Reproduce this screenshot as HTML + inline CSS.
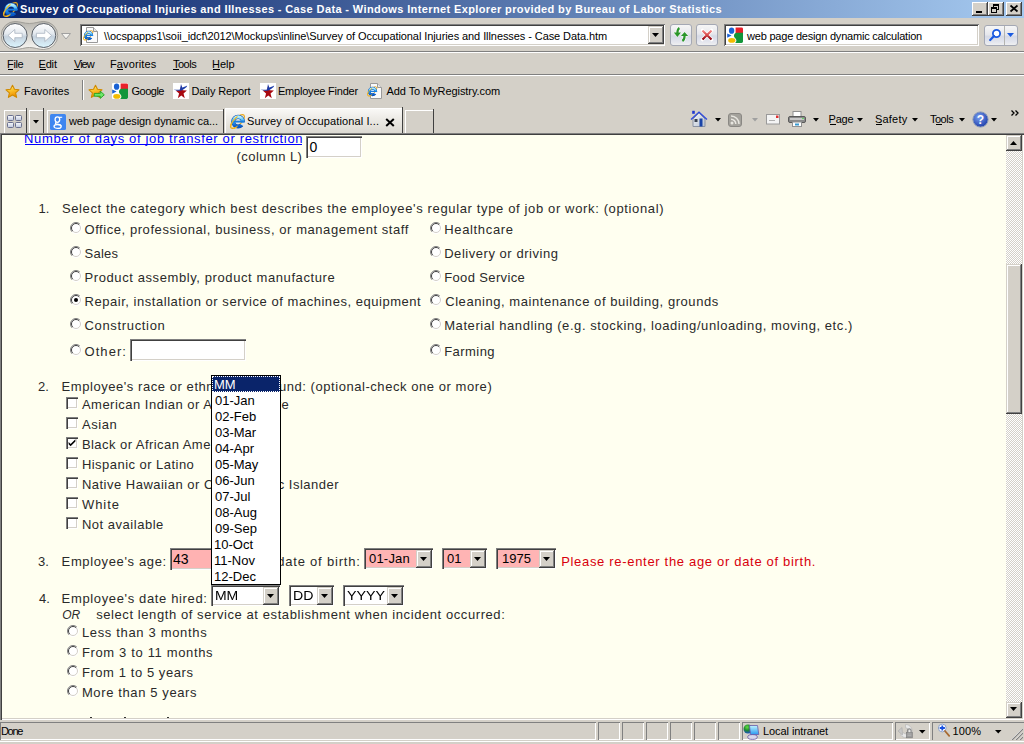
<!DOCTYPE html>
<html><head><meta charset="utf-8"><title>Survey of Occupational Injuries and Illnesses - Case Data</title>
<style>
html,body{margin:0;padding:0;width:1024px;height:744px;overflow:hidden;background:#d4d0c8;position:relative}
div,span,svg{position:absolute;box-sizing:border-box}
span{white-space:pre;line-height:normal}
</style></head><body>
<div style="left:0px;top:0px;width:1024px;height:18px;background:linear-gradient(to right,#0a246a,#a6caf0)"></div>
<svg style="position:absolute;left:2px;top:1px" width="17" height="17" viewBox="0 0 18 18"><defs><linearGradient id="iegt" x1="0" y1="0" x2="0" y2="1"><stop offset="0" stop-color="#b4f0ff"/><stop offset=".4" stop-color="#38b0f8"/><stop offset="1" stop-color="#0858c8"/></linearGradient>
<mask id="iemt" maskUnits="userSpaceOnUse" x="-2" y="-2" width="22" height="22"><rect width="18" height="18" fill="#fff"/><path d="M9.3 10.1H18V15.5Z" fill="#000"/></mask><clipPath id="iect"><path d="M0 0H18L0 18Z"/></clipPath></defs>
<ellipse cx="9" cy="9" rx="9.6" ry="3.9" transform="rotate(-45 9 9)" fill="none" stroke="#e8a818" stroke-width="1.3"/>
<g mask="url(#iemt)"><circle cx="9.6" cy="9.2" r="5.1" fill="none" stroke="#0a4cb0" stroke-width="4.4"/><circle cx="9.6" cy="9.2" r="5.1" fill="none" stroke="url(#iegt)" stroke-width="3.4"/></g>
<rect x="4.6" y="8.1" width="11.2" height="2" fill="#1a7ee0"/>
<ellipse cx="9" cy="9" rx="9.6" ry="3.9" transform="rotate(-45 9 9)" fill="none" stroke="#f4b820" stroke-width="1.3" clip-path="url(#iect)"/></svg>
<span style="left:20.00px;top:3px;font-family:'Liberation Sans';font-size:11px;font-weight:bold;font-style:normal;color:#fff;letter-spacing:0.382px;">Survey of Occupational Injuries and Illnesses - Case Data - Windows Internet Explorer provided by Bureau of Labor Statistics</span>
<div style="left:972px;top:2px;width:16px;height:14px;background:#d4d0c8;box-shadow:inset -1px -1px #404040,inset 1px 1px #fff,inset -2px -2px #808080;"></div>
<div style="left:988px;top:2px;width:16px;height:14px;background:#d4d0c8;box-shadow:inset -1px -1px #404040,inset 1px 1px #fff,inset -2px -2px #808080;"></div>
<div style="left:1006px;top:2px;width:16px;height:14px;background:#d4d0c8;box-shadow:inset -1px -1px #404040,inset 1px 1px #fff,inset -2px -2px #808080;"></div>
<div style="left:976px;top:11px;width:6px;height:2px;background:#000"></div>
<div style="left:993px;top:4px;width:6px;height:6px;border:1px solid #000;border-top-width:2px;background:transparent"></div>
<div style="left:991px;top:7px;width:6px;height:6px;border:1px solid #000;border-top-width:2px;background:#d4d0c8"></div>
<svg style="position:absolute;left:1009px;top:4px" width="10" height="9" viewBox="0 0 10 9"><path d="M1.5 1.5L8.5 7.5M8.5 1.5L1.5 7.5" stroke="#000" stroke-width="1.7"/></svg>
<svg style="position:absolute;left:1px;top:20px" width="58" height="31" viewBox="0 0 58 31"><defs>
<linearGradient id="bg1" x1="0" y1="0" x2="0" y2="1"><stop offset="0" stop-color="#ffffff"/><stop offset=".42" stop-color="#e4e9ef"/><stop offset=".55" stop-color="#c6d2de"/><stop offset="1" stop-color="#dcf6ff"/></linearGradient>
<linearGradient id="pn" x1="0" y1="0" x2="0" y2="1"><stop offset="0" stop-color="#b8b6b0"/><stop offset=".5" stop-color="#d8d6d0"/><stop offset="1" stop-color="#f8f7f4"/></linearGradient></defs>
<path d="M14.1 1.5C19 1.5 23 3.5 28.4 3.5S38 1.5 42.75 1.5A14 14 0 0 1 42.75 29.5C38 29.5 33 27.5 28.4 27.5S19 29.5 14.1 29.5A14 14 0 0 1 14.1 1.5Z" fill="url(#pn)" stroke="#a09e98" stroke-width="1"/>
<circle cx="14.1" cy="15.5" r="12" fill="url(#bg1)" stroke="#5a6068" stroke-width="1"/>
<circle cx="42.75" cy="15.5" r="12" fill="url(#bg1)" stroke="#5a6068" stroke-width="1"/>
<path d="M7 15.5L13.8 9.5V13.3H21.2V17.7H13.8V21.5Z" fill="#fff" stroke="#aab4c0" stroke-width=".8"/>
<path d="M50.6 15.5L43.8 9.5V13.3H35.4V17.7H43.8V21.5Z" fill="#fff" stroke="#aab4c0" stroke-width=".8"/></svg>
<svg style="position:absolute;left:61px;top:33px" width="10" height="7" viewBox="0 0 10 7"><path d="M0.5 0.5H9.5L5 6Z" fill="#f4f3ef" stroke="#a0a0a0" stroke-width="1"/></svg>
<div style="left:80px;top:24px;width:585px;height:22px;background:#fff;box-shadow:inset 1px 1px #808080,inset -1px -1px #fff,inset 2px 2px #404040,inset -2px -2px #d4d0c8;"></div>
<svg style="position:absolute;left:83px;top:27px" width="16" height="16" viewBox="0 0 16 16"><path d="M3.5 0.5H10.5L14.5 4.5V15.5H3.5Z" fill="#fafafa" stroke="#9a9a9a"/><path d="M10.5 0.5V4.5H14.5" fill="#e8e8e8" stroke="#9a9a9a"/><g transform="translate(-0.6,2.6) scale(.64)"><defs><linearGradient id="iega" x1="0" y1="0" x2="0" y2="1"><stop offset="0" stop-color="#b4f0ff"/><stop offset=".4" stop-color="#38b0f8"/><stop offset="1" stop-color="#0858c8"/></linearGradient>
<mask id="iema" maskUnits="userSpaceOnUse" x="-2" y="-2" width="22" height="22"><rect width="18" height="18" fill="#fff"/><path d="M9.3 10.1H18V15.5Z" fill="#000"/></mask><clipPath id="ieca"><path d="M0 0H18L0 18Z"/></clipPath></defs>
<ellipse cx="9" cy="9" rx="9.6" ry="3.9" transform="rotate(-45 9 9)" fill="none" stroke="#e8a818" stroke-width="1.3"/>
<g mask="url(#iema)"><circle cx="9.6" cy="9.2" r="5.1" fill="none" stroke="#0a4cb0" stroke-width="4.4"/><circle cx="9.6" cy="9.2" r="5.1" fill="none" stroke="url(#iega)" stroke-width="3.4"/></g>
<rect x="4.6" y="8.1" width="11.2" height="2" fill="#1a7ee0"/>
<ellipse cx="9" cy="9" rx="9.6" ry="3.9" transform="rotate(-45 9 9)" fill="none" stroke="#f4b820" stroke-width="1.3" clip-path="url(#ieca)"/></g></svg>
<span style="left:104.00px;top:30px;font-family:'Liberation Sans';font-size:11px;font-weight:normal;font-style:normal;color:#000;letter-spacing:-0.078px;">\\ocspapps1\soii_idcf\2012\Mockups\inline\Survey of Occupational Injuries and Illnesses - Case Data.htm</span>
<div style="left:648px;top:26px;width:16px;height:18px;background:#d4d0c8;box-shadow:inset -1px -1px #404040,inset 1px 1px #d4d0c8,inset -2px -2px #808080,inset 2px 2px #fff;"></div>
<svg style="position:absolute;left:652px;top:33px" width="8" height="5" viewBox="0 0 8 5"><path d="M0 0H7L3.5 4Z" fill="#000"/></svg>
<div style="left:670px;top:24px;width:22px;height:22px;background:linear-gradient(#f6f6f6,#e6e7ec 45%,#d6dae6 55%,#e4e6ee 85%,#f0f0f0);border:1px solid #a4a8b4;border-radius:3px;"></div>
<svg style="position:absolute;left:670px;top:24px" width="22" height="22" viewBox="0 0 22 22"><g stroke="#fff" stroke-width="1" stroke-linejoin="round"><path d="M9.4 4C8 4.8 7.4 6.5 7.4 9" fill="none" stroke-width="3.6"/><path d="M3.8 8.6H11L7.4 12.9Z" fill="#fff"/><path d="M12.4 17C14 16 14.6 14 14.6 11.5" fill="none" stroke-width="3.6"/><path d="M10.9 11.9H18.2L14.6 7.9Z" fill="#fff"/></g><path d="M9.4 4C8 4.8 7.4 6.5 7.4 9" fill="none" stroke="#2a962a" stroke-width="2.2"/><path d="M3.8 8.6H11L7.4 12.9Z" fill="#2a962a"/><path d="M12.4 17C14 16 14.6 14 14.6 11.5" fill="none" stroke="#2a962a" stroke-width="2.2"/><path d="M10.9 11.9H18.2L14.6 7.9Z" fill="#2a962a"/></svg>
<div style="left:696px;top:24px;width:22px;height:22px;background:linear-gradient(#f6f6f6,#e6e7ec 45%,#d6dae6 55%,#e4e6ee 85%,#f0f0f0);border:1px solid #a4a8b4;border-radius:3px;"></div>
<svg style="position:absolute;left:696px;top:24px" width="22" height="22" viewBox="0 0 22 22"><defs><linearGradient id="stx" x1="0" y1="0" x2="0" y2="1"><stop offset="0" stop-color="#f08a8a"/><stop offset=".5" stop-color="#d84848"/><stop offset="1" stop-color="#8a0010"/></linearGradient></defs><path d="M6.5 6.5L15.5 15.5M15.5 6.5L6.5 15.5" stroke="#fff" stroke-width="3.6" stroke-linecap="round"/><path d="M6.5 6.5L15.5 15.5M15.5 6.5L6.5 15.5" stroke="url(#stx)" stroke-width="2.2"/></svg>
<div style="left:724px;top:24px;width:255px;height:22px;background:#fff;box-shadow:inset 1px 1px #808080,inset -1px -1px #fff,inset 2px 2px #404040,inset -2px -2px #d4d0c8;"></div>
<svg style="position:absolute;left:727px;top:27px" width="16" height="16" viewBox="0 0 16 16"><rect width="16" height="16" rx="1" fill="#fff"/><path d="M8.6 0.4H14.6A1.4 1.4 0 0 1 16 1.8V6.2H8.6Z" fill="#e8202a"/><path d="M9 5.8H16V14.6A1.4 1.4 0 0 1 14.6 16H8C9.4 15 9.8 13.6 9 12.2C8.2 10.8 6.8 10.4 7 8.6C7.1 7.2 8 6.4 9 5.8Z" fill="#12963a"/>
<ellipse cx="4.6" cy="3.7" rx="2.7" ry="3.1" fill="#1a62d4"/><path d="M0.2 6.4L4.6 8.6L0.2 10.8Z" fill="#1a62d4"/><ellipse cx="4.8" cy="13.4" rx="3.6" ry="2.3" fill="#f2bc00"/></svg>
<span style="left:747.00px;top:30px;font-family:'Liberation Sans';font-size:11px;font-weight:normal;font-style:normal;color:#000;letter-spacing:-0.206px;">web page design dynamic calculation</span>
<div style="left:984px;top:25px;width:34px;height:21px;background:linear-gradient(#f6f6f6,#e6e7ec 45%,#d6dae6 55%,#e4e6ee 85%,#f0f0f0);border:1px solid #a4a8b4;border-radius:3px;"></div>
<div style="left:1004px;top:26px;width:1px;height:19px;background:#b4b4b0"></div>
<svg style="position:absolute;left:989px;top:28px" width="12" height="14" viewBox="0 0 12 14"><circle cx="7.5" cy="5.5" r="3.6" fill="#fff" stroke="#1a5ae0" stroke-width="1.8"/><path d="M5 8L1.2 12" stroke="#1a5ae0" stroke-width="2.2" stroke-linecap="round"/></svg>
<svg style="position:absolute;left:1007px;top:33px" width="8" height="5" viewBox="0 0 8 5"><path d="M0 0H7L3.5 4Z" fill="#1a5ae0"/></svg>
<div style="left:0px;top:51px;width:1024px;height:1px;background:#808080"></div>
<div style="left:0px;top:52px;width:1024px;height:1px;background:#fff"></div>
<span style="left:7.00px;top:58px;font-family:'Liberation Sans';font-size:11px;font-weight:normal;font-style:normal;color:#000;letter-spacing:-0.333px;">File</span>
<div style="left:8px;top:69px;width:5px;height:1px;background:#000"></div>
<span style="left:38.50px;top:58px;font-family:'Liberation Sans';font-size:11px;font-weight:normal;font-style:normal;color:#000;letter-spacing:-0.167px;">Edit</span>
<div style="left:40px;top:69px;width:6px;height:1px;background:#000"></div>
<span style="left:74.00px;top:58px;font-family:'Liberation Sans';font-size:11px;font-weight:normal;font-style:normal;color:#000;letter-spacing:-1.000px;">View</span>
<div style="left:74px;top:69px;width:6px;height:1px;background:#000"></div>
<span style="left:110.00px;top:58px;font-family:'Liberation Sans';font-size:11px;font-weight:normal;font-style:normal;color:#000;letter-spacing:0.125px;">Favorites</span>
<div style="left:117px;top:69px;width:6px;height:1px;background:#000"></div>
<span style="left:173.00px;top:58px;font-family:'Liberation Sans';font-size:11px;font-weight:normal;font-style:normal;color:#000;letter-spacing:-0.500px;">Tools</span>
<div style="left:173px;top:69px;width:6px;height:1px;background:#000"></div>
<span style="left:212.00px;top:58px;font-family:'Liberation Sans';font-size:11px;font-weight:normal;font-style:normal;color:#000;letter-spacing:0.000px;">Help</span>
<div style="left:213px;top:69px;width:7px;height:1px;background:#000"></div>
<div style="left:0px;top:74px;width:1024px;height:1px;background:#808080"></div>
<div style="left:0px;top:75px;width:1024px;height:1px;background:#fff"></div>
<svg style="position:absolute;left:5px;top:84px" width="15" height="15" viewBox="0 0 15 15"><defs><linearGradient id="sta" x1="0" y1="0" x2="0.3" y2="1"><stop offset="0" stop-color="#fffbd0"/><stop offset=".45" stop-color="#fcc830"/><stop offset="1" stop-color="#f09000"/></linearGradient></defs><path d="M7.5 1.2L9.5 5.3L14 5.8L10.6 8.8L11.6 13.4L7.5 11L3.4 13.4L4.4 8.8L1 5.8L5.5 5.3Z" fill="url(#sta)" stroke="#d08a00" stroke-width="1.1" stroke-linejoin="round"/></svg>
<span style="left:24.00px;top:85px;font-family:'Liberation Sans';font-size:11px;font-weight:normal;font-style:normal;color:#000;letter-spacing:0.000px;">Favorites</span>
<div style="left:82px;top:80px;width:1px;height:20px;background:#808080"></div>
<div style="left:83px;top:80px;width:1px;height:20px;background:#fff"></div>
<svg style="position:absolute;left:88px;top:84px" width="17" height="16" viewBox="0 0 17 16"><defs><linearGradient id="stb" x1="0" y1="0" x2="0.3" y2="1"><stop offset="0" stop-color="#fffbd0"/><stop offset=".45" stop-color="#fcc830"/><stop offset="1" stop-color="#f09000"/></linearGradient></defs><path d="M7.5 1.2L9.5 5.3L14 5.8L10.6 8.8L11.6 13.4L7.5 11L3.4 13.4L4.4 8.8L1 5.8L5.5 5.3Z" fill="url(#stb)" stroke="#d08a00" stroke-width="1.1" stroke-linejoin="round"/><path d="M6.2 9.4H12.3V7.2L16.3 10.8L12.3 14.4V12.2H6.2Z" fill="#6ee86a" stroke="#1ea01e" stroke-width=".9" stroke-linejoin="round"/></svg>
<svg style="position:absolute;left:112px;top:83px" width="16" height="16" viewBox="0 0 16 16"><rect width="16" height="16" rx="1" fill="#fff"/><path d="M8.6 0.4H14.6A1.4 1.4 0 0 1 16 1.8V6.2H8.6Z" fill="#e8202a"/><path d="M9 5.8H16V14.6A1.4 1.4 0 0 1 14.6 16H8C9.4 15 9.8 13.6 9 12.2C8.2 10.8 6.8 10.4 7 8.6C7.1 7.2 8 6.4 9 5.8Z" fill="#12963a"/>
<ellipse cx="4.6" cy="3.7" rx="2.7" ry="3.1" fill="#1a62d4"/><path d="M0.2 6.4L4.6 8.6L0.2 10.8Z" fill="#1a62d4"/><ellipse cx="4.8" cy="13.4" rx="3.6" ry="2.3" fill="#f2bc00"/></svg>
<span style="left:131.50px;top:85px;font-family:'Liberation Sans';font-size:11px;font-weight:normal;font-style:normal;color:#000;letter-spacing:-0.500px;">Google</span>
<svg style="position:absolute;left:173px;top:83px" width="16" height="16" viewBox="0 0 16 16"><rect x="0" y="0" width="16" height="16" fill="#fff"/><path d="M8.30 2.60L9.68 7.33L13.89 7.44L10.54 10.47L11.76 15.26L8.30 12.40L4.84 15.26L6.06 10.47L2.71 7.44L6.92 7.33Z" fill="#a80810"/><path d="M0.6 6.2C2.5 6.9 5 7 7 6.6L8 1L9.2 4.6C10.6 4.3 12.4 3.4 14.2 2.4L13.6 4C12 5.4 10 6.6 8.6 7.6C6 8 3 7.6 0.6 6.2Z" fill="#1a3aa8"/></svg>
<span style="left:191.50px;top:85px;font-family:'Liberation Sans';font-size:11px;font-weight:normal;font-style:normal;color:#000;letter-spacing:-0.136px;">Daily Report</span>
<svg style="position:absolute;left:260px;top:83px" width="16" height="16" viewBox="0 0 16 16"><rect x="0" y="0" width="16" height="16" fill="#fff"/><path d="M8.30 2.60L9.68 7.33L13.89 7.44L10.54 10.47L11.76 15.26L8.30 12.40L4.84 15.26L6.06 10.47L2.71 7.44L6.92 7.33Z" fill="#a80810"/><path d="M0.6 6.2C2.5 6.9 5 7 7 6.6L8 1L9.2 4.6C10.6 4.3 12.4 3.4 14.2 2.4L13.6 4C12 5.4 10 6.6 8.6 7.6C6 8 3 7.6 0.6 6.2Z" fill="#1a3aa8"/></svg>
<span style="left:278.00px;top:85px;font-family:'Liberation Sans';font-size:11px;font-weight:normal;font-style:normal;color:#000;letter-spacing:-0.214px;">Employee Finder</span>
<svg style="position:absolute;left:367px;top:83px" width="16" height="16" viewBox="0 0 16 16"><path d="M3.5 0.5H10.5L14.5 4.5V15.5H3.5Z" fill="#fafafa" stroke="#9a9a9a"/><path d="M10.5 0.5V4.5H14.5" fill="#e8e8e8" stroke="#9a9a9a"/><g transform="translate(-0.6,2.6) scale(.64)"><defs><linearGradient id="iegf" x1="0" y1="0" x2="0" y2="1"><stop offset="0" stop-color="#b4f0ff"/><stop offset=".4" stop-color="#38b0f8"/><stop offset="1" stop-color="#0858c8"/></linearGradient>
<mask id="iemf" maskUnits="userSpaceOnUse" x="-2" y="-2" width="22" height="22"><rect width="18" height="18" fill="#fff"/><path d="M9.3 10.1H18V15.5Z" fill="#000"/></mask><clipPath id="iecf"><path d="M0 0H18L0 18Z"/></clipPath></defs>
<ellipse cx="9" cy="9" rx="9.6" ry="3.9" transform="rotate(-45 9 9)" fill="none" stroke="#e8a818" stroke-width="1.3"/>
<g mask="url(#iemf)"><circle cx="9.6" cy="9.2" r="5.1" fill="none" stroke="#0a4cb0" stroke-width="4.4"/><circle cx="9.6" cy="9.2" r="5.1" fill="none" stroke="url(#iegf)" stroke-width="3.4"/></g>
<rect x="4.6" y="8.1" width="11.2" height="2" fill="#1a7ee0"/>
<ellipse cx="9" cy="9" rx="9.6" ry="3.9" transform="rotate(-45 9 9)" fill="none" stroke="#f4b820" stroke-width="1.3" clip-path="url(#iecf)"/></g></svg>
<span style="left:386.50px;top:85px;font-family:'Liberation Sans';font-size:11px;font-weight:normal;font-style:normal;color:#000;letter-spacing:-0.075px;">Add To MyRegistry.com</span>
<div style="left:4px;top:110px;width:22px;height:23px;background:#d4d0c8;box-shadow:inset 1px 1px #fff;"></div>
<div style="left:26px;top:108px;width:1px;height:25px;background:#404040"></div>
<div style="left:7px;top:115px;width:7px;height:6px;background:linear-gradient(#f4f6fa,#c4cce0);border:1px solid #6a7090;border-radius:1.5px"></div>
<div style="left:15px;top:115px;width:7px;height:6px;background:linear-gradient(#f4f6fa,#c4cce0);border:1px solid #6a7090;border-radius:1.5px"></div>
<div style="left:7px;top:122px;width:7px;height:6px;background:linear-gradient(#f4f6fa,#c4cce0);border:1px solid #6a7090;border-radius:1.5px"></div>
<div style="left:15px;top:122px;width:7px;height:6px;background:linear-gradient(#f4f6fa,#c4cce0);border:1px solid #6a7090;border-radius:1.5px"></div>
<div style="left:29px;top:110px;width:14px;height:23px;background:#d4d0c8;box-shadow:inset 1px 1px #fff;"></div>
<div style="left:43px;top:108px;width:1px;height:25px;background:#404040"></div>
<svg style="position:absolute;left:33px;top:120px" width="6" height="4" viewBox="0 0 6 4"><path d="M0 0H6L3 3.5Z" fill="#000"/></svg>
<div style="left:47px;top:110px;width:177px;height:23px;background:#d4d0c8;box-shadow:inset 1px 1px #fff,inset -1px 0 #404040"></div>
<svg style="position:absolute;left:50px;top:114px" width="16" height="16" viewBox="0 0 16 16"><rect x="0" y="0" width="16" height="16" rx="1.5" fill="#3f86f0"/><g fill="none" stroke="#fff"><ellipse cx="7.4" cy="5.6" rx="2.3" ry="2.8" stroke-width="1.3"/><path d="M9.2 3.4L12.2 3.2" stroke-width="1.1"/><path d="M6.2 8.3C4.6 9.4 5.6 10.3 8 10.4C9.8 10.5 11 11 11 12.3" stroke-width="1.1"/><ellipse cx="7.6" cy="12.4" rx="3.6" ry="1.9" stroke-width="1.3"/></g></svg>
<span style="left:69.00px;top:115px;font-family:'Liberation Sans';font-size:11px;font-weight:normal;font-style:normal;color:#000;letter-spacing:-0.071px;">web page design dynamic ca...</span>
<div style="left:225px;top:108px;width:178px;height:25px;background:linear-gradient(#fbfaf8,#eceae5 45%,#dcd9d2);box-shadow:inset 1px 1px #fff,inset -1px 0 #404040"></div>
<svg style="position:absolute;left:229px;top:113px" width="17" height="17" viewBox="0 0 18 18"><defs><linearGradient id="iegb" x1="0" y1="0" x2="0" y2="1"><stop offset="0" stop-color="#b4f0ff"/><stop offset=".4" stop-color="#38b0f8"/><stop offset="1" stop-color="#0858c8"/></linearGradient>
<mask id="iemb" maskUnits="userSpaceOnUse" x="-2" y="-2" width="22" height="22"><rect width="18" height="18" fill="#fff"/><path d="M9.3 10.1H18V15.5Z" fill="#000"/></mask><clipPath id="iecb"><path d="M0 0H18L0 18Z"/></clipPath></defs>
<ellipse cx="9" cy="9" rx="9.6" ry="3.9" transform="rotate(-45 9 9)" fill="none" stroke="#e8a818" stroke-width="1.3"/>
<g mask="url(#iemb)"><circle cx="9.6" cy="9.2" r="5.1" fill="none" stroke="#0a4cb0" stroke-width="4.4"/><circle cx="9.6" cy="9.2" r="5.1" fill="none" stroke="url(#iegb)" stroke-width="3.4"/></g>
<rect x="4.6" y="8.1" width="11.2" height="2" fill="#1a7ee0"/>
<ellipse cx="9" cy="9" rx="9.6" ry="3.9" transform="rotate(-45 9 9)" fill="none" stroke="#f4b820" stroke-width="1.3" clip-path="url(#iecb)"/></svg>
<span style="left:247.00px;top:115px;font-family:'Liberation Sans';font-size:11px;font-weight:normal;font-style:normal;color:#000;letter-spacing:0.115px;">Survey of Occupational I...</span>
<svg style="position:absolute;left:385px;top:118px" width="10" height="9" viewBox="0 0 10 9"><path d="M1.2 1L8.8 8M8.8 1L1.2 8" stroke="#000" stroke-width="2"/></svg>
<div style="left:405px;top:110px;width:29px;height:23px;background:#d4d0c8;box-shadow:inset 1px 1px #fff,inset -1px 0 #404040"></div>
<div style="left:433px;top:109px;width:1px;height:24px;background:#404040"></div>
<div style="left:402px;top:107px;width:1px;height:26px;background:#404040"></div>
<div style="left:223px;top:109px;width:1px;height:24px;background:#404040"></div>
<div style="left:0px;top:133px;width:1024px;height:1px;background:#808080"></div>
<svg style="position:absolute;left:690px;top:110px" width="18" height="17" viewBox="0 0 18 17"><defs><linearGradient id="hs" x1="0" y1="0" x2="1" y2="1"><stop offset="0" stop-color="#f4f6fa"/><stop offset="1" stop-color="#b8c2d0"/></linearGradient></defs><path d="M3 9V16.5H15V9L9 3Z" fill="url(#hs)" stroke="#8a92a2" stroke-width="1"/><path d="M1 9.5L9 2L17 9.5" fill="none" stroke="#2a46e0" stroke-width="1.2"/><rect x="2.2" y=".8" width="2.6" height="3" fill="#2038d0"/><rect x="4.5" y="9" width="3" height="3" fill="#3a4250"/><rect x="9.5" y="8.5" width="3" height="8" fill="#1a44a8"/></svg>
<svg style="position:absolute;left:715px;top:118px" width="6" height="4" viewBox="0 0 6 4"><path d="M0 0H6L3 3.5Z" fill="#000"/></svg>
<svg style="position:absolute;left:728px;top:113px" width="14" height="14" viewBox="0 0 14 14"><rect x=".5" y=".5" width="13" height="13" rx="2.5" fill="#a4a29c" stroke="#8a8884"/><circle cx="4" cy="10" r="1.5" fill="#e8e6e0"/><path d="M3 6.2A4.8 4.8 0 0 1 7.8 11M3 3A8 8 0 0 1 11 11" stroke="#e8e6e0" stroke-width="1.5" fill="none"/></svg>
<svg style="position:absolute;left:752px;top:118px" width="7" height="4" viewBox="0 0 7 4"><path d="M0 0H6L3 3.5Z" fill="#a0a0a0"/></svg>
<svg style="position:absolute;left:766px;top:114px" width="14" height="11" viewBox="0 0 14 11"><rect x=".5" y=".5" width="13" height="9.5" fill="#f4f4f4" stroke="#9a9a9a"/><path d="M3 6.5H9" stroke="#b0b0b0"/><rect x="10" y="1.5" width="2.5" height="2.5" fill="#e03030"/></svg>
<svg style="position:absolute;left:788px;top:111px" width="18" height="16" viewBox="0 0 18 16"><rect x="5" y=".5" width="8" height="5" fill="#fff" stroke="#909090"/><rect x=".5" y="5.5" width="17" height="6" rx="1.5" fill="#8a8a8a" stroke="#5a5a5a"/><rect x="2" y="7" width="14" height="2" fill="#c8c8c8"/><rect x="4.5" y="11" width="9" height="4.5" fill="#fff" stroke="#909090"/><rect x="7" y="12.5" width="4" height="2" fill="#3a9ad0"/><circle cx="15" cy="7.5" r=".8" fill="#40d040"/></svg>
<svg style="position:absolute;left:813px;top:118px" width="6" height="4" viewBox="0 0 6 4"><path d="M0 0H6L3 3.5Z" fill="#000"/></svg>
<span style="left:828.50px;top:113px;font-family:'Liberation Sans';font-size:11px;font-weight:normal;font-style:normal;color:#000;letter-spacing:-0.167px;">Page</span>
<div style="left:830px;top:124px;width:6px;height:1px;background:#000"></div>
<svg style="position:absolute;left:857px;top:118px" width="6" height="4" viewBox="0 0 6 4"><path d="M0 0H6L3 3.5Z" fill="#000"/></svg>
<span style="left:875.00px;top:113px;font-family:'Liberation Sans';font-size:11px;font-weight:normal;font-style:normal;color:#000;letter-spacing:0.200px;">Safety</span>
<div style="left:876px;top:124px;width:6px;height:1px;background:#000"></div>
<svg style="position:absolute;left:912px;top:118px" width="6" height="4" viewBox="0 0 6 4"><path d="M0 0H6L3 3.5Z" fill="#000"/></svg>
<span style="left:930.00px;top:113px;font-family:'Liberation Sans';font-size:11px;font-weight:normal;font-style:normal;color:#000;letter-spacing:-0.500px;">Tools</span>
<div style="left:936px;top:124px;width:6px;height:1px;background:#000"></div>
<svg style="position:absolute;left:959px;top:118px" width="6" height="4" viewBox="0 0 6 4"><path d="M0 0H6L3 3.5Z" fill="#000"/></svg>
<svg style="position:absolute;left:972px;top:111px" width="17" height="17" viewBox="0 0 17 17"><defs><radialGradient id="hq" cx=".4" cy=".35" r=".7"><stop offset="0" stop-color="#7aa0f0"/><stop offset="1" stop-color="#1a3aa8"/></radialGradient></defs><circle cx="8.5" cy="8.5" r="7.6" fill="url(#hq)" stroke="#8a9ab8" stroke-width="1"/><text x="8.5" y="13" font-family="Liberation Sans" font-weight="bold" font-size="12" fill="#fff" text-anchor="middle">?</text></svg>
<svg style="position:absolute;left:991px;top:118px" width="6" height="4" viewBox="0 0 6 4"><path d="M0 0H6L3 3.5Z" fill="#000"/></svg>
<svg style="position:absolute;left:1011px;top:110px" width="9" height="6" viewBox="0 0 9 6"><path d="M0.5 0.5L3 3L0.5 5.5M4.5 0.5L7 3L4.5 5.5" stroke="#000" stroke-width="1.3" fill="none"/></svg>
<div style="left:0px;top:133px;width:1024px;height:587px;background:#fffff0;box-shadow:inset 1px 1px #808080,inset 2px 2px #404040,inset -1px -1px #fff,inset -2px -2px #d4d0c8"></div>
<div style="left:2px;top:135px;width:1004px;height:583px;overflow:hidden">
<span style="left:22.00px;top:-4px;font-family:'Liberation Sans';font-size:13px;font-weight:normal;font-style:normal;color:#0000ff;letter-spacing:0.648px;">Number of days of job transfer or restriction</span>
<div style="left:23px;top:9px;width:277px;height:1px;background:#0000ff"></div>
<span style="left:234.50px;top:14px;font-family:'Liberation Sans';font-size:13px;font-weight:normal;font-style:normal;color:#2a2a2a;letter-spacing:0.444px;">(column L)</span>
<div style="left:304px;top:1px;width:56px;height:22px;background:#fff;box-shadow:inset 1px 1px #808080,inset 2px 2px #404040,inset -1px -1px #fff,inset -2px -2px #d4d0c8"></div>
<span style="left:307.50px;top:4px;font-family:'Liberation Sans';font-size:14px;font-weight:normal;font-style:normal;color:#000;letter-spacing:0.000px;">0</span>
<span style="left:36.50px;top:66px;font-family:'Liberation Sans';font-size:13px;font-weight:normal;font-style:normal;color:#2a2a2a;letter-spacing:0.000px;">1.</span>
<span style="left:59.90px;top:66px;font-family:'Liberation Sans';font-size:13px;font-weight:normal;font-style:normal;color:#2a2a2a;letter-spacing:0.640px;">Select the category which best describes the employee&#x27;s regular type of job or work: (optional)</span>
<svg style="position:absolute;left:68px;top:87px" width="12" height="12" viewBox="0 0 12 12"><circle cx="6" cy="6" r="5.5" fill="#fff"/><path d="M9.9 2.1A5.5 5.5 0 0 0 2.1 9.9" stroke="#808080" stroke-width="1" fill="none"/><path d="M9.2 2.8A4.5 4.5 0 0 0 2.8 9.2" stroke="#404040" stroke-width="1" fill="none"/><path d="M2.1 9.9A5.5 5.5 0 0 0 9.9 2.1" stroke="#fff" stroke-width="1" fill="none"/><path d="M2.8 9.2A4.5 4.5 0 0 0 9.2 2.8" stroke="#d4d0c8" stroke-width="1" fill="none"/></svg>
<span style="left:82.50px;top:87px;font-family:'Liberation Sans';font-size:13px;font-weight:normal;font-style:normal;color:#2a2a2a;letter-spacing:0.562px;">Office, professional, business, or management staff</span>
<svg style="position:absolute;left:428px;top:87px" width="12" height="12" viewBox="0 0 12 12"><circle cx="6" cy="6" r="5.5" fill="#fff"/><path d="M9.9 2.1A5.5 5.5 0 0 0 2.1 9.9" stroke="#808080" stroke-width="1" fill="none"/><path d="M9.2 2.8A4.5 4.5 0 0 0 2.8 9.2" stroke="#404040" stroke-width="1" fill="none"/><path d="M2.1 9.9A5.5 5.5 0 0 0 9.9 2.1" stroke="#fff" stroke-width="1" fill="none"/><path d="M2.8 9.2A4.5 4.5 0 0 0 9.2 2.8" stroke="#d4d0c8" stroke-width="1" fill="none"/></svg>
<span style="left:442.20px;top:87px;font-family:'Liberation Sans';font-size:13px;font-weight:normal;font-style:normal;color:#2a2a2a;letter-spacing:0.667px;">Healthcare</span>
<svg style="position:absolute;left:68px;top:111px" width="12" height="12" viewBox="0 0 12 12"><circle cx="6" cy="6" r="5.5" fill="#fff"/><path d="M9.9 2.1A5.5 5.5 0 0 0 2.1 9.9" stroke="#808080" stroke-width="1" fill="none"/><path d="M9.2 2.8A4.5 4.5 0 0 0 2.8 9.2" stroke="#404040" stroke-width="1" fill="none"/><path d="M2.1 9.9A5.5 5.5 0 0 0 9.9 2.1" stroke="#fff" stroke-width="1" fill="none"/><path d="M2.8 9.2A4.5 4.5 0 0 0 9.2 2.8" stroke="#d4d0c8" stroke-width="1" fill="none"/></svg>
<span style="left:82.50px;top:111px;font-family:'Liberation Sans';font-size:13px;font-weight:normal;font-style:normal;color:#2a2a2a;letter-spacing:0.275px;">Sales</span>
<svg style="position:absolute;left:428px;top:111px" width="12" height="12" viewBox="0 0 12 12"><circle cx="6" cy="6" r="5.5" fill="#fff"/><path d="M9.9 2.1A5.5 5.5 0 0 0 2.1 9.9" stroke="#808080" stroke-width="1" fill="none"/><path d="M9.2 2.8A4.5 4.5 0 0 0 2.8 9.2" stroke="#404040" stroke-width="1" fill="none"/><path d="M2.1 9.9A5.5 5.5 0 0 0 9.9 2.1" stroke="#fff" stroke-width="1" fill="none"/><path d="M2.8 9.2A4.5 4.5 0 0 0 9.2 2.8" stroke="#d4d0c8" stroke-width="1" fill="none"/></svg>
<span style="left:442.20px;top:111px;font-family:'Liberation Sans';font-size:13px;font-weight:normal;font-style:normal;color:#2a2a2a;letter-spacing:0.539px;">Delivery or driving</span>
<svg style="position:absolute;left:68px;top:135px" width="12" height="12" viewBox="0 0 12 12"><circle cx="6" cy="6" r="5.5" fill="#fff"/><path d="M9.9 2.1A5.5 5.5 0 0 0 2.1 9.9" stroke="#808080" stroke-width="1" fill="none"/><path d="M9.2 2.8A4.5 4.5 0 0 0 2.8 9.2" stroke="#404040" stroke-width="1" fill="none"/><path d="M2.1 9.9A5.5 5.5 0 0 0 9.9 2.1" stroke="#fff" stroke-width="1" fill="none"/><path d="M2.8 9.2A4.5 4.5 0 0 0 9.2 2.8" stroke="#d4d0c8" stroke-width="1" fill="none"/></svg>
<span style="left:82.50px;top:135px;font-family:'Liberation Sans';font-size:13px;font-weight:normal;font-style:normal;color:#2a2a2a;letter-spacing:0.594px;">Product assembly, product manufacture</span>
<svg style="position:absolute;left:428px;top:135px" width="12" height="12" viewBox="0 0 12 12"><circle cx="6" cy="6" r="5.5" fill="#fff"/><path d="M9.9 2.1A5.5 5.5 0 0 0 2.1 9.9" stroke="#808080" stroke-width="1" fill="none"/><path d="M9.2 2.8A4.5 4.5 0 0 0 2.8 9.2" stroke="#404040" stroke-width="1" fill="none"/><path d="M2.1 9.9A5.5 5.5 0 0 0 9.9 2.1" stroke="#fff" stroke-width="1" fill="none"/><path d="M2.8 9.2A4.5 4.5 0 0 0 9.2 2.8" stroke="#d4d0c8" stroke-width="1" fill="none"/></svg>
<span style="left:442.20px;top:135px;font-family:'Liberation Sans';font-size:13px;font-weight:normal;font-style:normal;color:#2a2a2a;letter-spacing:0.364px;">Food Service</span>
<svg style="position:absolute;left:68px;top:159px" width="12" height="12" viewBox="0 0 12 12"><circle cx="6" cy="6" r="5.5" fill="#fff"/><path d="M9.9 2.1A5.5 5.5 0 0 0 2.1 9.9" stroke="#808080" stroke-width="1" fill="none"/><path d="M9.2 2.8A4.5 4.5 0 0 0 2.8 9.2" stroke="#404040" stroke-width="1" fill="none"/><path d="M2.1 9.9A5.5 5.5 0 0 0 9.9 2.1" stroke="#fff" stroke-width="1" fill="none"/><path d="M2.8 9.2A4.5 4.5 0 0 0 9.2 2.8" stroke="#d4d0c8" stroke-width="1" fill="none"/><circle cx="6" cy="6" r="2" fill="#000"/></svg>
<span style="left:82.50px;top:159px;font-family:'Liberation Sans';font-size:13px;font-weight:normal;font-style:normal;color:#2a2a2a;letter-spacing:0.536px;">Repair, installation or service of machines, equipment</span>
<svg style="position:absolute;left:428px;top:159px" width="12" height="12" viewBox="0 0 12 12"><circle cx="6" cy="6" r="5.5" fill="#fff"/><path d="M9.9 2.1A5.5 5.5 0 0 0 2.1 9.9" stroke="#808080" stroke-width="1" fill="none"/><path d="M9.2 2.8A4.5 4.5 0 0 0 2.8 9.2" stroke="#404040" stroke-width="1" fill="none"/><path d="M2.1 9.9A5.5 5.5 0 0 0 9.9 2.1" stroke="#fff" stroke-width="1" fill="none"/><path d="M2.8 9.2A4.5 4.5 0 0 0 9.2 2.8" stroke="#d4d0c8" stroke-width="1" fill="none"/></svg>
<span style="left:443.20px;top:159px;font-family:'Liberation Sans';font-size:13px;font-weight:normal;font-style:normal;color:#2a2a2a;letter-spacing:0.561px;">Cleaning, maintenance of building, grounds</span>
<svg style="position:absolute;left:68px;top:183px" width="12" height="12" viewBox="0 0 12 12"><circle cx="6" cy="6" r="5.5" fill="#fff"/><path d="M9.9 2.1A5.5 5.5 0 0 0 2.1 9.9" stroke="#808080" stroke-width="1" fill="none"/><path d="M9.2 2.8A4.5 4.5 0 0 0 2.8 9.2" stroke="#404040" stroke-width="1" fill="none"/><path d="M2.1 9.9A5.5 5.5 0 0 0 9.9 2.1" stroke="#fff" stroke-width="1" fill="none"/><path d="M2.8 9.2A4.5 4.5 0 0 0 9.2 2.8" stroke="#d4d0c8" stroke-width="1" fill="none"/></svg>
<span style="left:82.50px;top:183px;font-family:'Liberation Sans';font-size:13px;font-weight:normal;font-style:normal;color:#2a2a2a;letter-spacing:0.664px;">Construction</span>
<svg style="position:absolute;left:428px;top:183px" width="12" height="12" viewBox="0 0 12 12"><circle cx="6" cy="6" r="5.5" fill="#fff"/><path d="M9.9 2.1A5.5 5.5 0 0 0 2.1 9.9" stroke="#808080" stroke-width="1" fill="none"/><path d="M9.2 2.8A4.5 4.5 0 0 0 2.8 9.2" stroke="#404040" stroke-width="1" fill="none"/><path d="M2.1 9.9A5.5 5.5 0 0 0 9.9 2.1" stroke="#fff" stroke-width="1" fill="none"/><path d="M2.8 9.2A4.5 4.5 0 0 0 9.2 2.8" stroke="#d4d0c8" stroke-width="1" fill="none"/></svg>
<span style="left:442.20px;top:183px;font-family:'Liberation Sans';font-size:13px;font-weight:normal;font-style:normal;color:#2a2a2a;letter-spacing:0.577px;">Material handling (e.g. stocking, loading/unloading, moving, etc.)</span>
<svg style="position:absolute;left:68px;top:209px" width="12" height="12" viewBox="0 0 12 12"><circle cx="6" cy="6" r="5.5" fill="#fff"/><path d="M9.9 2.1A5.5 5.5 0 0 0 2.1 9.9" stroke="#808080" stroke-width="1" fill="none"/><path d="M9.2 2.8A4.5 4.5 0 0 0 2.8 9.2" stroke="#404040" stroke-width="1" fill="none"/><path d="M2.1 9.9A5.5 5.5 0 0 0 9.9 2.1" stroke="#fff" stroke-width="1" fill="none"/><path d="M2.8 9.2A4.5 4.5 0 0 0 9.2 2.8" stroke="#d4d0c8" stroke-width="1" fill="none"/></svg>
<span style="left:82.50px;top:209px;font-family:'Liberation Sans';font-size:13px;font-weight:normal;font-style:normal;color:#2a2a2a;letter-spacing:1.060px;">Other:</span>
<svg style="position:absolute;left:428px;top:209px" width="12" height="12" viewBox="0 0 12 12"><circle cx="6" cy="6" r="5.5" fill="#fff"/><path d="M9.9 2.1A5.5 5.5 0 0 0 2.1 9.9" stroke="#808080" stroke-width="1" fill="none"/><path d="M9.2 2.8A4.5 4.5 0 0 0 2.8 9.2" stroke="#404040" stroke-width="1" fill="none"/><path d="M2.1 9.9A5.5 5.5 0 0 0 9.9 2.1" stroke="#fff" stroke-width="1" fill="none"/><path d="M2.8 9.2A4.5 4.5 0 0 0 9.2 2.8" stroke="#d4d0c8" stroke-width="1" fill="none"/></svg>
<span style="left:442.20px;top:209px;font-family:'Liberation Sans';font-size:13px;font-weight:normal;font-style:normal;color:#2a2a2a;letter-spacing:0.450px;">Farming</span>
<div style="left:128px;top:204px;width:116px;height:22px;background:#fff;box-shadow:inset 1px 1px #808080,inset 2px 2px #404040,inset -1px -1px #fff,inset -2px -2px #d4d0c8"></div>
<span style="left:36.00px;top:244px;font-family:'Liberation Sans';font-size:13px;font-weight:normal;font-style:normal;color:#2a2a2a;letter-spacing:0.000px;">2.</span>
<span style="left:59.60px;top:244px;font-family:'Liberation Sans';font-size:13px;font-weight:normal;font-style:normal;color:#2a2a2a;letter-spacing:0.554px;">Employee&#x27;s race or ethnic background: (optional-check one or more)</span>
<div style="left:64px;top:262px;width:12px;height:12px;background:#fff;box-shadow:inset 1px 1px #808080,inset 2px 2px #404040,inset -1px -1px #fff,inset -2px -2px #d4d0c8"></div>
<span style="left:79.90px;top:262px;font-family:'Liberation Sans';font-size:13px;font-weight:normal;font-style:normal;color:#2a2a2a;letter-spacing:0.494px;">American Indian or Alaska Native</span>
<div style="left:64px;top:282px;width:12px;height:12px;background:#fff;box-shadow:inset 1px 1px #808080,inset 2px 2px #404040,inset -1px -1px #fff,inset -2px -2px #d4d0c8"></div>
<span style="left:79.90px;top:282px;font-family:'Liberation Sans';font-size:13px;font-weight:normal;font-style:normal;color:#2a2a2a;letter-spacing:0.600px;">Asian</span>
<div style="left:64px;top:302px;width:12px;height:12px;background:#fff;box-shadow:inset 1px 1px #808080,inset 2px 2px #404040,inset -1px -1px #fff,inset -2px -2px #d4d0c8"></div>
<svg style="position:absolute;left:64px;top:302px" width="12" height="12" viewBox="0 0 12 12"><path d="M2.6 5L4.6 7L9.4 2.2V4.4L4.6 9.2L2.6 7.2Z" fill="#000"/></svg>
<span style="left:79.90px;top:302px;font-family:'Liberation Sans';font-size:13px;font-weight:normal;font-style:normal;color:#2a2a2a;letter-spacing:0.450px;">Black or African American</span>
<div style="left:64px;top:322px;width:12px;height:12px;background:#fff;box-shadow:inset 1px 1px #808080,inset 2px 2px #404040,inset -1px -1px #fff,inset -2px -2px #d4d0c8"></div>
<span style="left:79.90px;top:322px;font-family:'Liberation Sans';font-size:13px;font-weight:normal;font-style:normal;color:#2a2a2a;letter-spacing:0.465px;">Hispanic or Latino</span>
<div style="left:64px;top:342px;width:12px;height:12px;background:#fff;box-shadow:inset 1px 1px #808080,inset 2px 2px #404040,inset -1px -1px #fff,inset -2px -2px #d4d0c8"></div>
<span style="left:79.90px;top:342px;font-family:'Liberation Sans';font-size:13px;font-weight:normal;font-style:normal;color:#2a2a2a;letter-spacing:0.490px;">Native Hawaiian or Other Pacific Islander</span>
<div style="left:64px;top:362px;width:12px;height:12px;background:#fff;box-shadow:inset 1px 1px #808080,inset 2px 2px #404040,inset -1px -1px #fff,inset -2px -2px #d4d0c8"></div>
<span style="left:79.90px;top:362px;font-family:'Liberation Sans';font-size:13px;font-weight:normal;font-style:normal;color:#2a2a2a;letter-spacing:0.975px;">White</span>
<div style="left:64px;top:382px;width:12px;height:12px;background:#fff;box-shadow:inset 1px 1px #808080,inset 2px 2px #404040,inset -1px -1px #fff,inset -2px -2px #d4d0c8"></div>
<span style="left:79.90px;top:382px;font-family:'Liberation Sans';font-size:13px;font-weight:normal;font-style:normal;color:#2a2a2a;letter-spacing:0.525px;">Not available</span>
<span style="left:36.00px;top:419px;font-family:'Liberation Sans';font-size:13px;font-weight:normal;font-style:normal;color:#2a2a2a;letter-spacing:0.000px;">3.</span>
<span style="left:59.60px;top:419px;font-family:'Liberation Sans';font-size:13px;font-weight:normal;font-style:normal;color:#2a2a2a;letter-spacing:0.629px;">Employee&#x27;s age:</span>
<div style="left:168px;top:413px;width:56px;height:22px;background:#ffb2b2;box-shadow:inset 1px 1px #808080,inset 2px 2px #404040,inset -1px -1px #fff,inset -2px -2px #d4d0c8"></div>
<span style="left:171.00px;top:416px;font-family:'Liberation Sans';font-size:14px;font-weight:normal;font-style:normal;color:#000;letter-spacing:0.000px;">43</span>
<span style="left:257.60px;top:419px;font-family:'Liberation Sans';font-size:13px;font-weight:normal;font-style:normal;color:#2a2a2a;letter-spacing:0.800px;">or date of birth:</span>
<div style="left:362px;top:413px;width:69px;height:21px;background:#ffb4b4;box-shadow:inset 1px 1px #808080,inset 2px 2px #404040,inset -1px -1px #fff,inset -2px -2px #d4d0c8"></div>
<div style="left:414px;top:415px;width:16px;height:18px;background:#d4d0c8;box-shadow:inset -1px -1px #404040,inset 1px 1px #d4d0c8,inset -2px -2px #808080,inset 2px 2px #fff;"></div>
<svg style="position:absolute;left:418px;top:422px" width="8" height="5" viewBox="0 0 8 5"><path d="M0 0H7L3.5 4Z" fill="#000"/></svg>
<span style="left:367.00px;top:416px;font-family:'Liberation Sans';font-size:13px;font-weight:normal;font-style:normal;color:#000;letter-spacing:0.200px;">01-Jan</span>
<div style="left:440px;top:413px;width:45px;height:21px;background:#ffb4b4;box-shadow:inset 1px 1px #808080,inset 2px 2px #404040,inset -1px -1px #fff,inset -2px -2px #d4d0c8"></div>
<div style="left:468px;top:415px;width:16px;height:18px;background:#d4d0c8;box-shadow:inset -1px -1px #404040,inset 1px 1px #d4d0c8,inset -2px -2px #808080,inset 2px 2px #fff;"></div>
<svg style="position:absolute;left:472px;top:422px" width="8" height="5" viewBox="0 0 8 5"><path d="M0 0H7L3.5 4Z" fill="#000"/></svg>
<span style="left:445.00px;top:416px;font-family:'Liberation Sans';font-size:13px;font-weight:normal;font-style:normal;color:#000;letter-spacing:0.000px;">01</span>
<div style="left:494px;top:413px;width:60px;height:21px;background:#ffb4b4;box-shadow:inset 1px 1px #808080,inset 2px 2px #404040,inset -1px -1px #fff,inset -2px -2px #d4d0c8"></div>
<div style="left:537px;top:415px;width:16px;height:18px;background:#d4d0c8;box-shadow:inset -1px -1px #404040,inset 1px 1px #d4d0c8,inset -2px -2px #808080,inset 2px 2px #fff;"></div>
<svg style="position:absolute;left:541px;top:422px" width="8" height="5" viewBox="0 0 8 5"><path d="M0 0H7L3.5 4Z" fill="#000"/></svg>
<span style="left:500.00px;top:416px;font-family:'Liberation Sans';font-size:13px;font-weight:normal;font-style:normal;color:#000;letter-spacing:0.000px;">1975</span>
<span style="left:559.20px;top:419px;font-family:'Liberation Sans';font-size:13px;font-weight:normal;font-style:normal;color:#d8000c;letter-spacing:0.683px;">Please re-enter the age or date of birth.</span>
<span style="left:37.00px;top:456px;font-family:'Liberation Sans';font-size:13px;font-weight:normal;font-style:normal;color:#2a2a2a;letter-spacing:0.000px;">4.</span>
<span style="left:59.60px;top:456px;font-family:'Liberation Sans';font-size:13px;font-weight:normal;font-style:normal;color:#2a2a2a;letter-spacing:0.643px;">Employee&#x27;s date hired:</span>
<div style="left:209px;top:450px;width:69px;height:21px;background:#fff;box-shadow:inset 1px 1px #808080,inset 2px 2px #404040,inset -1px -1px #fff,inset -2px -2px #d4d0c8"></div>
<div style="left:261px;top:452px;width:16px;height:18px;background:#d4d0c8;box-shadow:inset -1px -1px #404040,inset 1px 1px #d4d0c8,inset -2px -2px #808080,inset 2px 2px #fff;"></div>
<svg style="position:absolute;left:265px;top:459px" width="8" height="5" viewBox="0 0 8 5"><path d="M0 0H7L3.5 4Z" fill="#000"/></svg>
<span style="transform:scaleX(1.0750);transform-origin:1px 0;left:213.00px;top:453px;font-family:'Liberation Sans';font-size:13px;font-weight:normal;font-style:normal;color:#000;letter-spacing:0.000px;">MM</span>
<div style="left:287px;top:450px;width:45px;height:21px;background:#fff;box-shadow:inset 1px 1px #808080,inset 2px 2px #404040,inset -1px -1px #fff,inset -2px -2px #d4d0c8"></div>
<div style="left:315px;top:452px;width:16px;height:18px;background:#d4d0c8;box-shadow:inset -1px -1px #404040,inset 1px 1px #d4d0c8,inset -2px -2px #808080,inset 2px 2px #fff;"></div>
<svg style="position:absolute;left:319px;top:459px" width="8" height="5" viewBox="0 0 8 5"><path d="M0 0H7L3.5 4Z" fill="#000"/></svg>
<span style="transform:scaleX(1.0882);transform-origin:1px 0;left:291.00px;top:453px;font-family:'Liberation Sans';font-size:13px;font-weight:normal;font-style:normal;color:#000;letter-spacing:0.000px;">DD</span>
<div style="left:341px;top:450px;width:61px;height:21px;background:#fff;box-shadow:inset 1px 1px #808080,inset 2px 2px #404040,inset -1px -1px #fff,inset -2px -2px #d4d0c8"></div>
<div style="left:385px;top:452px;width:16px;height:18px;background:#d4d0c8;box-shadow:inset -1px -1px #404040,inset 1px 1px #d4d0c8,inset -2px -2px #808080,inset 2px 2px #fff;"></div>
<svg style="position:absolute;left:389px;top:459px" width="8" height="5" viewBox="0 0 8 5"><path d="M0 0H7L3.5 4Z" fill="#000"/></svg>
<span style="transform:scaleX(1.1000);transform-origin:1px 0;left:345.00px;top:453px;font-family:'Liberation Sans';font-size:13px;font-weight:normal;font-style:normal;color:#000;letter-spacing:0.000px;">YYYY</span>
<span style="left:60.20px;top:473px;font-family:'Liberation Sans';font-size:12px;font-weight:normal;font-style:italic;color:#2a2a2a;letter-spacing:0.000px;">OR</span>
<span style="left:94.20px;top:472px;font-family:'Liberation Sans';font-size:13px;font-weight:normal;font-style:normal;color:#2a2a2a;letter-spacing:0.581px;">select length of service at establishment when incident occurred:</span>
<svg style="position:absolute;left:65px;top:490px" width="12" height="12" viewBox="0 0 12 12"><circle cx="6" cy="6" r="5.5" fill="#fff"/><path d="M9.9 2.1A5.5 5.5 0 0 0 2.1 9.9" stroke="#808080" stroke-width="1" fill="none"/><path d="M9.2 2.8A4.5 4.5 0 0 0 2.8 9.2" stroke="#404040" stroke-width="1" fill="none"/><path d="M2.1 9.9A5.5 5.5 0 0 0 9.9 2.1" stroke="#fff" stroke-width="1" fill="none"/><path d="M2.8 9.2A4.5 4.5 0 0 0 9.2 2.8" stroke="#d4d0c8" stroke-width="1" fill="none"/></svg>
<span style="left:79.90px;top:490px;font-family:'Liberation Sans';font-size:13px;font-weight:normal;font-style:normal;color:#2a2a2a;letter-spacing:0.665px;">Less than 3 months</span>
<svg style="position:absolute;left:65px;top:510px" width="12" height="12" viewBox="0 0 12 12"><circle cx="6" cy="6" r="5.5" fill="#fff"/><path d="M9.9 2.1A5.5 5.5 0 0 0 2.1 9.9" stroke="#808080" stroke-width="1" fill="none"/><path d="M9.2 2.8A4.5 4.5 0 0 0 2.8 9.2" stroke="#404040" stroke-width="1" fill="none"/><path d="M2.1 9.9A5.5 5.5 0 0 0 9.9 2.1" stroke="#fff" stroke-width="1" fill="none"/><path d="M2.8 9.2A4.5 4.5 0 0 0 9.2 2.8" stroke="#d4d0c8" stroke-width="1" fill="none"/></svg>
<span style="left:79.90px;top:510px;font-family:'Liberation Sans';font-size:13px;font-weight:normal;font-style:normal;color:#2a2a2a;letter-spacing:0.650px;">From 3 to 11 months</span>
<svg style="position:absolute;left:65px;top:530px" width="12" height="12" viewBox="0 0 12 12"><circle cx="6" cy="6" r="5.5" fill="#fff"/><path d="M9.9 2.1A5.5 5.5 0 0 0 2.1 9.9" stroke="#808080" stroke-width="1" fill="none"/><path d="M9.2 2.8A4.5 4.5 0 0 0 2.8 9.2" stroke="#404040" stroke-width="1" fill="none"/><path d="M2.1 9.9A5.5 5.5 0 0 0 9.9 2.1" stroke="#fff" stroke-width="1" fill="none"/><path d="M2.8 9.2A4.5 4.5 0 0 0 9.2 2.8" stroke="#d4d0c8" stroke-width="1" fill="none"/></svg>
<span style="left:79.90px;top:530px;font-family:'Liberation Sans';font-size:13px;font-weight:normal;font-style:normal;color:#2a2a2a;letter-spacing:0.575px;">From 1 to 5 years</span>
<svg style="position:absolute;left:65px;top:550px" width="12" height="12" viewBox="0 0 12 12"><circle cx="6" cy="6" r="5.5" fill="#fff"/><path d="M9.9 2.1A5.5 5.5 0 0 0 2.1 9.9" stroke="#808080" stroke-width="1" fill="none"/><path d="M9.2 2.8A4.5 4.5 0 0 0 2.8 9.2" stroke="#404040" stroke-width="1" fill="none"/><path d="M2.1 9.9A5.5 5.5 0 0 0 9.9 2.1" stroke="#fff" stroke-width="1" fill="none"/><path d="M2.8 9.2A4.5 4.5 0 0 0 9.2 2.8" stroke="#d4d0c8" stroke-width="1" fill="none"/></svg>
<span style="left:79.90px;top:550px;font-family:'Liberation Sans';font-size:13px;font-weight:normal;font-style:normal;color:#2a2a2a;letter-spacing:0.619px;">More than 5 years</span>
<div style="left:88px;top:582px;width:2px;height:1px;background:#333"></div>
<div style="left:122px;top:582px;width:2px;height:1px;background:#333"></div>
<div style="left:165px;top:582px;width:2px;height:1px;background:#333"></div>
<div style="left:209px;top:240px;width:70px;height:210px;background:#fff;border:1px solid #000"></div>
<div style="left:210px;top:241px;width:68px;height:16px;background:#0a246a;outline:1px dotted #fff;outline-offset:-1px"></div>
<span style="left:212.00px;top:242px;font-family:'Liberation Sans';font-size:13px;font-weight:normal;font-style:normal;color:#fff;letter-spacing:0.000px;">MM</span>
<span style="left:213.00px;top:258px;font-family:'Liberation Sans';font-size:13px;font-weight:normal;font-style:normal;color:#000;letter-spacing:0.000px;">01-Jan</span>
<span style="left:213.00px;top:274px;font-family:'Liberation Sans';font-size:13px;font-weight:normal;font-style:normal;color:#000;letter-spacing:0.000px;">02-Feb</span>
<span style="left:213.00px;top:290px;font-family:'Liberation Sans';font-size:13px;font-weight:normal;font-style:normal;color:#000;letter-spacing:0.000px;">03-Mar</span>
<span style="left:213.00px;top:306px;font-family:'Liberation Sans';font-size:13px;font-weight:normal;font-style:normal;color:#000;letter-spacing:0.000px;">04-Apr</span>
<span style="left:213.00px;top:322px;font-family:'Liberation Sans';font-size:13px;font-weight:normal;font-style:normal;color:#000;letter-spacing:0.000px;">05-May</span>
<span style="left:213.00px;top:338px;font-family:'Liberation Sans';font-size:13px;font-weight:normal;font-style:normal;color:#000;letter-spacing:0.000px;">06-Jun</span>
<span style="left:213.00px;top:354px;font-family:'Liberation Sans';font-size:13px;font-weight:normal;font-style:normal;color:#000;letter-spacing:0.000px;">07-Jul</span>
<span style="left:213.00px;top:370px;font-family:'Liberation Sans';font-size:13px;font-weight:normal;font-style:normal;color:#000;letter-spacing:0.000px;">08-Aug</span>
<span style="left:213.00px;top:386px;font-family:'Liberation Sans';font-size:13px;font-weight:normal;font-style:normal;color:#000;letter-spacing:0.000px;">09-Sep</span>
<span style="left:212.00px;top:402px;font-family:'Liberation Sans';font-size:13px;font-weight:normal;font-style:normal;color:#000;letter-spacing:0.000px;">10-Oct</span>
<span style="left:212.00px;top:418px;font-family:'Liberation Sans';font-size:13px;font-weight:normal;font-style:normal;color:#000;letter-spacing:0.000px;">11-Nov</span>
<span style="left:212.00px;top:434px;font-family:'Liberation Sans';font-size:13px;font-weight:normal;font-style:normal;color:#000;letter-spacing:0.000px;">12-Dec</span>
</div>
<div style="left:1006px;top:151px;width:16px;height:551px;background:repeating-conic-gradient(#fff 0 25%,#d4d0c8 0 50%) 0 0/2px 2px"></div>
<div style="left:1006px;top:135px;width:16px;height:16px;background:#d4d0c8;box-shadow:inset -1px -1px #404040,inset 1px 1px #d4d0c8,inset -2px -2px #808080,inset 2px 2px #fff;"></div>
<svg style="position:absolute;left:1010px;top:141px" width="8" height="5" viewBox="0 0 8 5"><path d="M0 4H7L3.5 0Z" fill="#000"/></svg>
<div style="left:1006px;top:264px;width:16px;height:150px;background:#d4d0c8;box-shadow:inset -1px -1px #404040,inset 1px 1px #d4d0c8,inset -2px -2px #808080,inset 2px 2px #fff;"></div>
<div style="left:1006px;top:702px;width:16px;height:16px;background:#d4d0c8;box-shadow:inset -1px -1px #404040,inset 1px 1px #d4d0c8,inset -2px -2px #808080,inset 2px 2px #fff;"></div>
<svg style="position:absolute;left:1010px;top:707px" width="8" height="5" viewBox="0 0 8 5"><path d="M0 0H7L3.5 4Z" fill="#000"/></svg>
<div style="left:0px;top:720px;width:1024px;height:24px;background:#d4d0c8"></div>
<div style="left:0px;top:741px;width:1024px;height:1px;background:#fff"></div>
<div style="left:0px;top:722px;width:596px;height:18px;background:#d4d0c8;box-shadow:inset 1px 1px #808080,inset -1px -1px #fff;"></div>
<span style="left:1.00px;top:725px;font-family:'Liberation Sans';font-size:11px;font-weight:normal;font-style:normal;color:#000;letter-spacing:-1.333px;">Done</span>
<div style="left:598px;top:722px;width:22px;height:18px;background:#d4d0c8;box-shadow:inset 1px 1px #808080,inset -1px -1px #fff;"></div>
<div style="left:622px;top:722px;width:22px;height:18px;background:#d4d0c8;box-shadow:inset 1px 1px #808080,inset -1px -1px #fff;"></div>
<div style="left:646px;top:722px;width:22px;height:18px;background:#d4d0c8;box-shadow:inset 1px 1px #808080,inset -1px -1px #fff;"></div>
<div style="left:670px;top:722px;width:22px;height:18px;background:#d4d0c8;box-shadow:inset 1px 1px #808080,inset -1px -1px #fff;"></div>
<div style="left:694px;top:722px;width:22px;height:18px;background:#d4d0c8;box-shadow:inset 1px 1px #808080,inset -1px -1px #fff;"></div>
<div style="left:718px;top:722px;width:22px;height:18px;background:#d4d0c8;box-shadow:inset 1px 1px #808080,inset -1px -1px #fff;"></div>
<div style="left:742px;top:722px;width:151px;height:18px;background:#d4d0c8;box-shadow:inset 1px 1px #808080,inset -1px -1px #fff;"></div>
<svg style="position:absolute;left:743px;top:723px" width="18" height="17" viewBox="0 0 18 17"><defs><linearGradient id="mon" x1="0" y1="0" x2="0" y2="1"><stop offset="0" stop-color="#c0f4ff"/><stop offset="1" stop-color="#2a9af0"/></linearGradient><radialGradient id="glb" cx=".4" cy=".3" r=".7"><stop offset="0" stop-color="#60e040"/><stop offset=".5" stop-color="#208a30"/><stop offset="1" stop-color="#1a50c0"/></radialGradient></defs><ellipse cx="9.5" cy="14" rx="4.8" ry="2.4" fill="#d8d8ec" stroke="#6a5aa0" stroke-width=".8"/><circle cx="5" cy="6" r="4.5" fill="url(#glb)"/><path d="M6.5 2.5H14.5L15.8 11.5H7.5Z" fill="url(#mon)" stroke="#6a5aa8" stroke-width=".8"/></svg>
<span style="left:763.00px;top:725px;font-family:'Liberation Sans';font-size:11px;font-weight:normal;font-style:normal;color:#000;letter-spacing:-0.077px;">Local intranet</span>
<div style="left:895px;top:722px;width:35px;height:18px;background:#d4d0c8;box-shadow:inset 1px 1px #808080,inset -1px -1px #fff;"></div>
<svg style="position:absolute;left:897px;top:723px" width="18" height="16" viewBox="0 0 18 16"><path d="M8.5 1.5A6.5 6.5 0 1 1 3.5 12L6 9.5A3 3 0 1 0 8.5 4.8Z" fill="#e8e8e8" stroke="#b8b8b8" stroke-width=".7"/><path d="M1 8L5 4.5L5.5 12Z" fill="#c8c8c8" stroke="#a8a8a8" stroke-width=".6"/><path d="M10.5 9.5V7.6A1.8 1.8 0 0 1 14.1 7.6V9.5" fill="none" stroke="#8a8a8a" stroke-width="1.2"/><rect x="9.3" y="9.6" width="6" height="5.2" fill="#9a9a9a" stroke="#7a7a7a" stroke-width=".6"/><path d="M10.5 11H14.3M10.5 12.6H14.3" stroke="#c0c0c0" stroke-width=".6"/></svg>
<svg style="position:absolute;left:919px;top:730px" width="7" height="4" viewBox="0 0 7 4"><path d="M0 0H6.5L3.25 3.5Z" fill="#000"/></svg>
<div style="left:932px;top:722px;width:92px;height:18px;background:#d4d0c8;box-shadow:inset 1px 1px #808080"></div>
<svg style="position:absolute;left:937px;top:723px" width="14" height="15" viewBox="0 0 14 15"><circle cx="5.3" cy="5" r="3.9" fill="#fff" stroke="#8aa0c8" stroke-width="1"/><path d="M5.3 2.4V7.6M2.7 5H7.9" stroke="#1850e0" stroke-width="1.8"/><path d="M8 8L12.2 12.8" stroke="#a86a30" stroke-width="1.8" stroke-linecap="round"/></svg>
<span style="left:952.50px;top:725px;font-family:'Liberation Sans';font-size:11px;font-weight:normal;font-style:normal;color:#000;letter-spacing:0.167px;">100%</span>
<svg style="position:absolute;left:995px;top:730px" width="7" height="4" viewBox="0 0 7 4"><path d="M0 0H6.5L3.25 3.5Z" fill="#000"/></svg>
<svg style="position:absolute;left:1010px;top:727px" width="13" height="13" viewBox="0 0 13 13"><path d="M12.5 1.5L1.5 12.5M12.5 5.5L5.5 12.5M12.5 9.5L9.5 12.5" stroke="#fff" stroke-width="1"/><path d="M13 2L2 13M13 6L6 13M13 10L10 13" stroke="#808080" stroke-width="1.2"/></svg>
</body></html>
